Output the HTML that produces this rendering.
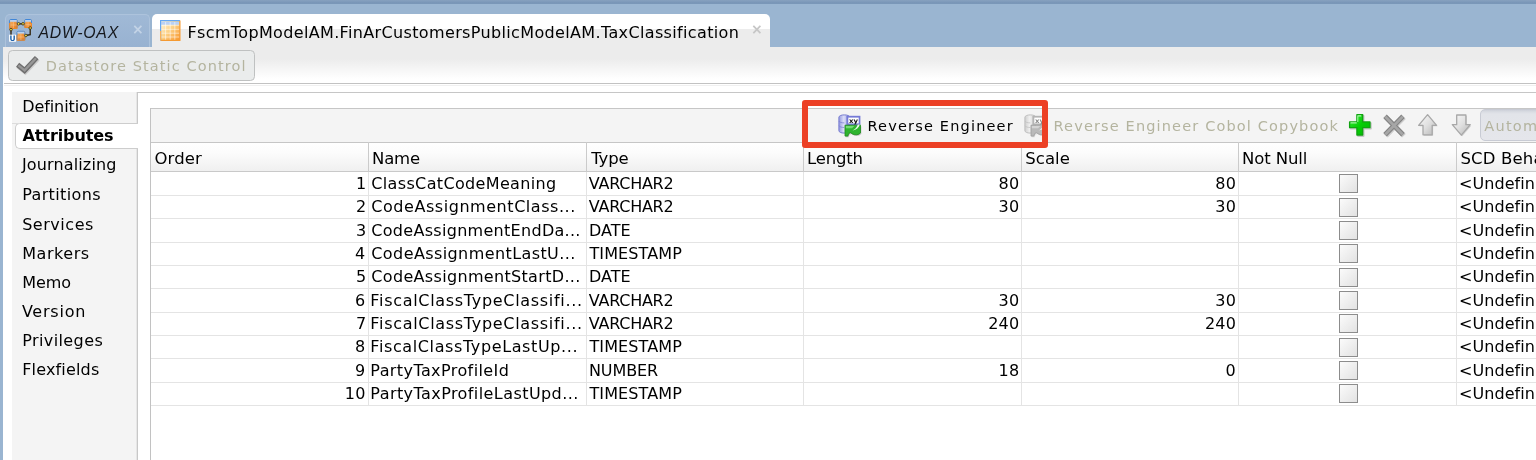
<!DOCTYPE html>
<html lang="en">
<head>
<meta charset="utf-8">
<title>Datastore Attributes</title>
<style>
html,body{margin:0;padding:0;}
body{width:1536px;height:460px;overflow:hidden;background:#fff;position:relative;font-family:"DejaVu Sans","Liberation Sans",sans-serif;font-size:16px;color:#000;}
.a{position:absolute;}
.t{position:absolute;white-space:nowrap;line-height:20px;}
#app{position:absolute;left:0;top:0;width:1536px;height:460px;overflow:hidden;will-change:transform;}
.hl{position:absolute;height:1px;background:#c9c9c9;}
.vl{position:absolute;width:1px;background:#c9c9c9;}
.cb{position:absolute;width:17px;height:17px;border:1px solid #8c8c8c;background:linear-gradient(135deg,#fbfbfb,#e2e2e2);}
</style>
</head>
<body>
<div id="app">
<div class="a" style="left:0;top:0;width:1536px;height:47px;background:linear-gradient(#87a1bf 0px,#7d99ba 2px,#7592b4 3.4px,#9ab5d1 4.1px,#9ab5d1 100%);"></div>
<div class="a" style="left:0;top:47px;width:3px;height:413px;background:#9ab5d1;"></div>
<div class="a" style="left:3px;top:46.6px;width:1533px;height:37.4px;background:linear-gradient(#ececec 0,#ececec 12px,#ffffff 32px);"></div>
<div class="a" style="left:5px;top:14px;width:145px;height:33px;border:1px solid #adc3dc;border-bottom:none;border-radius:5px 5px 0 0;background:linear-gradient(#a0b9d6,#98b2d1);box-sizing:border-box;"></div>
<div class="a" style="left:152px;top:14px;width:618px;height:33px;border-radius:5px 5px 0 0;background:linear-gradient(#ffffff 0,#ffffff 14.5px,#ececec 15.5px,#ececec 100%);"></div>
<svg class="a" style="left:8px;top:18px" width="26" height="26" viewBox="0 0 26 26">
<defs><linearGradient id="og" x1="0" y1="0" x2="1" y2="1"><stop offset="0" stop-color="#f8b466"/><stop offset="1" stop-color="#e8791c"/></linearGradient></defs>
<g stroke="#2e2008" stroke-width="1.3" fill="none"><path d="M9.500 5.800h7M3 11v6.500M22.200 9.500v7.200l-4.500 .8"/></g>
<g stroke-width="1">
<rect x="1.600" y="1.500" width="7.600" height="9" rx="1.200" fill="url(#og)" stroke="#3f86d9"/>
<rect x="16.700" y="1.500" width="6.800" height="8" rx="1.200" fill="url(#og)" stroke="#3f86d9"/>
<rect x="9" y="13.300" width="7.800" height="9" rx="1.200" fill="url(#og)" stroke="#3f86d9"/>
</g>
<g fill="#b5d0f2"><rect x="2.100" y="2" width="6.600" height="1.800"/><rect x="17.200" y="2" width="5.800" height="1.800"/><rect x="9.500" y="13.800" width="6.800" height="1.800"/></g>
<g stroke="#e9892c" stroke-width="1" fill="none"><path d="M1.600 5v5.500h7.600V5M16.700 5v4.500h6.800V5M9 17v5.300h7.800V17"/></g>
<g stroke="#fbd3a0" stroke-width=".6" stroke-opacity=".8"><path d="M5.400 4v6M2.500 7h6M20.100 4v5M17.500 6.700h5.500M12.900 16v6M9.800 19h6.400"/></g>
<rect x="1.100" y="16.700" width="7" height="7" fill="#fff"/><text x="4.600" y="23" font-family="'DejaVu Sans',sans-serif" font-weight="bold" font-size="7.500" fill="#1f63ad" text-anchor="middle">U</text>
<g fill="#ecdc4a" stroke="#2e2008" stroke-width=".7"><circle cx="10.600" cy="5.800" r="1.300"/><circle cx="15" cy="5.800" r="1.300"/><circle cx="3" cy="11.600" r="1.300"/><circle cx="22.200" cy="10" r="1.300"/><circle cx="17.900" cy="17.500" r="1.300"/></g>
</svg>
<div class="t" style="left:38.50px;top:23px;font-size:15.8px;color:#15181d;font-style:italic;letter-spacing:0.75px;font-family:'Liberation Sans',sans-serif;">ADW-OAX</div>
<div class="t" style="left:132.00px;top:19px;font-size:14px;color:#c3d3e6;font-weight:bold;">×</div>
<svg class="a" style="left:160px;top:20px" width="21" height="21" viewBox="0 0 21 21">
<defs><linearGradient id="tg" x1="0" y1="0" x2="1" y2="1"><stop offset="0" stop-color="#fffbe8"/><stop offset=".45" stop-color="#fdd48a"/><stop offset="1" stop-color="#f8962c"/></linearGradient></defs>
<rect x=".6" y=".6" width="19.300" height="19.800" fill="url(#tg)"/>
<rect x="1.200" y="1.800" width="18" height="3" fill="#b9d1f6"/>
<g stroke="#fff" stroke-opacity=".6" stroke-width=".9"><path d="M5.600 2v18M10.200 2v18M14.800 2v18M1 5.300h18.500M1 9.300h18.500M1 13.200h18.500M1 17h18.500"/></g>
<path d="M19.900 .6v19.800H.6" fill="none" stroke="#f59a32" stroke-width="1.200"/>
<path d="M.6 20.400V.6h19.300" fill="none" stroke="#64a7f3" stroke-width="1.200"/>
<path d="M.6 20.400V11" fill="none" stroke="#f7b15c" stroke-width="1.200"/>
</svg>
<div class="t" style="left:187.50px;top:23px;font-size:16px;letter-spacing:0.354px;">FscmTopModelAM.FinArCustomersPublicModelAM.TaxClassification</div>
<div class="t" style="left:751.00px;top:19px;font-size:14px;color:#c6c6c6;font-weight:bold;">×</div>
<div class="a" style="left:8px;top:50px;width:246.5px;height:31px;box-sizing:border-box;border:1px solid #bfc1c1;border-radius:4.5px;background:#eaecec;"></div>
<svg class="a" style="left:15px;top:54px" width="25" height="22" viewBox="0 0 25 22">
<path d="M2.600 10.800l7 5.700L21.700 3.600" fill="none" stroke="#cdcdcd" stroke-width="5.800" stroke-linejoin="miter" transform="translate(.7 .9)"/>
<path d="M2.600 10.800l7 5.700L21.700 3.600" fill="none" stroke="#6e6e6e" stroke-width="5" stroke-linejoin="miter"/>
<path d="M3.400 11.400l6.200 5L21 4.200" fill="none" stroke="#979797" stroke-width="2.400" stroke-linejoin="miter"/>
</svg>
<div class="t" style="left:45.80px;top:56px;font-size:14.5px;color:#b4b49f;letter-spacing:1.104px;">Datastore Static Control</div>
<div class="hl" style="left:4px;top:83.2px;width:1532px;height:1.3px;background:#c2c2c2;"></div>
<div class="hl" style="left:4px;top:84.5px;width:1532px;background:#f0f0f0;"></div>
<div class="a" style="left:12px;top:92px;width:125px;height:368px;background:#f4f4f4;"></div>
<div class="vl" style="left:136px;top:92px;height:368px;background:#e6e6e6;"></div>
<div class="vl" style="left:137px;top:92px;height:368px;background:#c8c8c8;"></div>
<div class="hl" style="left:137px;top:92.2px;width:1399px;background:#c6c6c6;"></div>
<div class="a" style="left:15px;top:123px;width:123px;height:25.6px;box-sizing:border-box;border:1px solid #cdcdcd;border-right:none;border-radius:5px 0 0 5px;background:#fff;"></div>
<div class="hl" style="left:12px;top:123px;width:8px;background:#dcdcdc;"></div>
<div class="t" style="left:22.20px;top:97px;font-size:16px;letter-spacing:-0.078px;">Definition</div>
<div class="t" style="left:22.50px;top:126px;font-size:16px;font-weight:bold;letter-spacing:-0.1px;">Attributes</div>
<div class="t" style="left:21.90px;top:155px;font-size:16px;letter-spacing:0.145px;">Journalizing</div>
<div class="t" style="left:22.20px;top:185px;font-size:16px;letter-spacing:0.367px;">Partitions</div>
<div class="t" style="left:22.20px;top:215px;font-size:16px;letter-spacing:0.529px;">Services</div>
<div class="t" style="left:22.20px;top:244px;font-size:16px;letter-spacing:0.55px;">Markers</div>
<div class="t" style="left:22.20px;top:273px;font-size:16px;letter-spacing:-0.033px;">Memo</div>
<div class="t" style="left:21.90px;top:302px;font-size:16px;letter-spacing:0.767px;">Version</div>
<div class="t" style="left:22.20px;top:331px;font-size:16px;letter-spacing:0.4px;">Privileges</div>
<div class="t" style="left:22.20px;top:360px;font-size:16px;letter-spacing:0.167px;">Flexfields</div>
<div class="a" style="left:150px;top:108.3px;width:1386px;height:34px;box-sizing:border-box;border:1px solid #c6c6c6;border-right:none;border-bottom:none;background:#f4f4f4;"></div>
<div class="a" style="left:151px;top:142px;width:1385px;height:30px;background:linear-gradient(#ffffff,#fcfcfc 35%,#efefef);"></div>
<div class="hl" style="left:150px;top:142px;width:1386px;background:#c6c6c6;"></div>
<div class="hl" style="left:150px;top:171.2px;width:1386px;background:#c9c9c9;"></div>
<div class="vl" style="left:150.2px;top:108px;height:352px;background:#c2c2c2;"></div>
<div class="vl" style="left:368px;top:142px;height:30px;background:#cbcbcb;"></div>
<div class="vl" style="left:368px;top:172px;height:233.5px;background:#e4e4e4;"></div>
<div class="vl" style="left:586.2px;top:142px;height:30px;background:#cbcbcb;"></div>
<div class="vl" style="left:586.2px;top:172px;height:233.5px;background:#e4e4e4;"></div>
<div class="vl" style="left:803.2px;top:142px;height:30px;background:#cbcbcb;"></div>
<div class="vl" style="left:803.2px;top:172px;height:233.5px;background:#e4e4e4;"></div>
<div class="vl" style="left:1021.2px;top:142px;height:30px;background:#cbcbcb;"></div>
<div class="vl" style="left:1021.2px;top:172px;height:233.5px;background:#e4e4e4;"></div>
<div class="vl" style="left:1238px;top:142px;height:30px;background:#cbcbcb;"></div>
<div class="vl" style="left:1238px;top:172px;height:233.5px;background:#e4e4e4;"></div>
<div class="vl" style="left:1456.2px;top:142px;height:30px;background:#cbcbcb;"></div>
<div class="vl" style="left:1456.2px;top:172px;height:233.5px;background:#e4e4e4;"></div>
<div class="hl" style="left:151px;top:194.8px;width:1385px;background:#e4e4e4;"></div>
<div class="hl" style="left:151px;top:218.1px;width:1385px;background:#e4e4e4;"></div>
<div class="hl" style="left:151px;top:241.5px;width:1385px;background:#e4e4e4;"></div>
<div class="hl" style="left:151px;top:264.8px;width:1385px;background:#e4e4e4;"></div>
<div class="hl" style="left:151px;top:288.2px;width:1385px;background:#e4e4e4;"></div>
<div class="hl" style="left:151px;top:311.6px;width:1385px;background:#e4e4e4;"></div>
<div class="hl" style="left:151px;top:334.9px;width:1385px;background:#e4e4e4;"></div>
<div class="hl" style="left:151px;top:358.3px;width:1385px;background:#e4e4e4;"></div>
<div class="hl" style="left:151px;top:381.6px;width:1385px;background:#e4e4e4;"></div>
<div class="hl" style="left:151px;top:405.0px;width:1385px;background:#e4e4e4;"></div>
<div class="t" style="left:154.50px;top:149px;font-size:16.5px;letter-spacing:0.125px;">Order</div>
<div class="t" style="left:372.00px;top:149px;font-size:16.5px;letter-spacing:-0.167px;">Name</div>
<div class="t" style="left:591.25px;top:149px;font-size:16.5px;letter-spacing:-0.167px;">Type</div>
<div class="t" style="left:807.00px;top:149px;font-size:16.5px;letter-spacing:-0.2px;">Length</div>
<div class="t" style="left:1025.25px;top:149px;font-size:16.5px;letter-spacing:0.062px;">Scale</div>
<div class="t" style="left:1242.00px;top:149px;font-size:16.5px;letter-spacing:-0.107px;">Not Null</div>
<div class="t" style="left:1460.50px;top:149px;font-size:16.5px;letter-spacing:0.15px;">SCD Behavior</div>
<div class="t" style="left:356.00px;top:174px;font-size:16px;letter-spacing:0.3px;">1</div>
<div class="t" style="left:371.30px;top:174px;font-size:16px;letter-spacing:0.344px;">ClassCatCodeMeaning</div>
<div class="t" style="left:588.80px;top:174px;font-size:16px;letter-spacing:-0.257px;">VARCHAR2</div>
<div class="t" style="left:998.45px;top:174px;font-size:16px;letter-spacing:0.3px;">80</div>
<div class="t" style="left:1215.20px;top:174px;font-size:16px;letter-spacing:0.3px;">80</div>
<div class="cb" style="left:1339.2px;top:174.2px;"></div>
<div class="t" style="left:1459.00px;top:174px;font-size:16px;letter-spacing:0.057px;">&lt;Undefin<span style="margin-left:2px">ed&gt;</span></div>
<div class="t" style="left:356.00px;top:197px;font-size:16px;letter-spacing:0.3px;">2</div>
<div class="t" style="left:371.30px;top:197px;font-size:16px;letter-spacing:0.548px;">CodeAssignmentClass...</div>
<div class="t" style="left:588.80px;top:197px;font-size:16px;letter-spacing:-0.257px;">VARCHAR2</div>
<div class="t" style="left:998.45px;top:197px;font-size:16px;letter-spacing:0.3px;">30</div>
<div class="t" style="left:1215.20px;top:197px;font-size:16px;letter-spacing:0.3px;">30</div>
<div class="cb" style="left:1339.2px;top:197.6px;"></div>
<div class="t" style="left:1459.00px;top:197px;font-size:16px;letter-spacing:0.057px;">&lt;Undefin<span style="margin-left:2px">ed&gt;</span></div>
<div class="t" style="left:356.00px;top:221px;font-size:16px;letter-spacing:0.3px;">3</div>
<div class="t" style="left:371.30px;top:221px;font-size:16px;letter-spacing:0.295px;">CodeAssignmentEndDa...</div>
<div class="t" style="left:589.00px;top:221px;font-size:16px;">DATE</div>
<div class="cb" style="left:1339.2px;top:220.9px;"></div>
<div class="t" style="left:1459.00px;top:221px;font-size:16px;letter-spacing:0.057px;">&lt;Undefin<span style="margin-left:2px">ed&gt;</span></div>
<div class="t" style="left:355.00px;top:244px;font-size:16px;letter-spacing:0.3px;">4</div>
<div class="t" style="left:371.30px;top:244px;font-size:16px;letter-spacing:0.405px;">CodeAssignmentLastU...</div>
<div class="t" style="left:589.50px;top:244px;font-size:16px;letter-spacing:0.1px;">TIMESTAMP</div>
<div class="cb" style="left:1339.2px;top:244.3px;"></div>
<div class="t" style="left:1459.00px;top:244px;font-size:16px;letter-spacing:0.057px;">&lt;Undefin<span style="margin-left:2px">ed&gt;</span></div>
<div class="t" style="left:356.00px;top:267px;font-size:16px;letter-spacing:0.3px;">5</div>
<div class="t" style="left:371.30px;top:267px;font-size:16px;letter-spacing:0.327px;">CodeAssignmentStartD...</div>
<div class="t" style="left:589.00px;top:267px;font-size:16px;">DATE</div>
<div class="cb" style="left:1339.2px;top:267.6px;"></div>
<div class="t" style="left:1459.00px;top:267px;font-size:16px;letter-spacing:0.057px;">&lt;Undefin<span style="margin-left:2px">ed&gt;</span></div>
<div class="t" style="left:355.00px;top:291px;font-size:16px;letter-spacing:0.3px;">6</div>
<div class="t" style="left:370.30px;top:291px;font-size:16px;letter-spacing:0.688px;">FiscalClassTypeClassifi...</div>
<div class="t" style="left:588.80px;top:291px;font-size:16px;letter-spacing:-0.257px;">VARCHAR2</div>
<div class="t" style="left:998.45px;top:291px;font-size:16px;letter-spacing:0.3px;">30</div>
<div class="t" style="left:1215.20px;top:291px;font-size:16px;letter-spacing:0.3px;">30</div>
<div class="cb" style="left:1339.2px;top:291.0px;"></div>
<div class="t" style="left:1459.00px;top:291px;font-size:16px;letter-spacing:0.057px;">&lt;Undefin<span style="margin-left:2px">ed&gt;</span></div>
<div class="t" style="left:356.00px;top:314px;font-size:16px;letter-spacing:0.3px;">7</div>
<div class="t" style="left:370.30px;top:314px;font-size:16px;letter-spacing:0.688px;">FiscalClassTypeClassifi...</div>
<div class="t" style="left:588.80px;top:314px;font-size:16px;letter-spacing:-0.257px;">VARCHAR2</div>
<div class="t" style="left:988.15px;top:314px;font-size:16px;letter-spacing:0.3px;">240</div>
<div class="t" style="left:1204.90px;top:314px;font-size:16px;letter-spacing:0.3px;">240</div>
<div class="cb" style="left:1339.2px;top:314.4px;"></div>
<div class="t" style="left:1459.00px;top:314px;font-size:16px;letter-spacing:0.057px;">&lt;Undefin<span style="margin-left:2px">ed&gt;</span></div>
<div class="t" style="left:355.00px;top:337px;font-size:16px;letter-spacing:0.3px;">8</div>
<div class="t" style="left:370.30px;top:337px;font-size:16px;letter-spacing:0.609px;">FiscalClassTypeLastUp...</div>
<div class="t" style="left:589.50px;top:337px;font-size:16px;letter-spacing:0.1px;">TIMESTAMP</div>
<div class="cb" style="left:1339.2px;top:337.7px;"></div>
<div class="t" style="left:1459.00px;top:337px;font-size:16px;letter-spacing:0.057px;">&lt;Undefin<span style="margin-left:2px">ed&gt;</span></div>
<div class="t" style="left:355.00px;top:361px;font-size:16px;letter-spacing:0.3px;">9</div>
<div class="t" style="left:370.30px;top:361px;font-size:16px;letter-spacing:0.406px;">PartyTaxProfileId</div>
<div class="t" style="left:589.00px;top:361px;font-size:16px;letter-spacing:-0.1px;">NUMBER</div>
<div class="t" style="left:998.45px;top:361px;font-size:16px;letter-spacing:0.3px;">18</div>
<div class="t" style="left:1225.50px;top:361px;font-size:16px;letter-spacing:0.3px;">0</div>
<div class="cb" style="left:1339.2px;top:361.1px;"></div>
<div class="t" style="left:1459.00px;top:361px;font-size:16px;letter-spacing:0.057px;">&lt;Undefin<span style="margin-left:2px">ed&gt;</span></div>
<div class="t" style="left:344.70px;top:384px;font-size:16px;letter-spacing:0.3px;">10</div>
<div class="t" style="left:370.30px;top:384px;font-size:16px;letter-spacing:0.425px;">PartyTaxProfileLastUpd...</div>
<div class="t" style="left:589.50px;top:384px;font-size:16px;letter-spacing:0.1px;">TIMESTAMP</div>
<div class="cb" style="left:1339.2px;top:384.4px;"></div>
<div class="t" style="left:1459.00px;top:384px;font-size:16px;letter-spacing:0.057px;">&lt;Undefin<span style="margin-left:2px">ed&gt;</span></div>
<svg class="a" style="left:837.5px;top:113.5px" width="24" height="24" viewBox="0 0 24 24">
<defs><linearGradient id="cya" x1="0" y1="0" x2="1" y2="0"><stop offset="0" stop-color="#959ae0"/><stop offset=".45" stop-color="#dcdef8"/><stop offset="1" stop-color="#959ae0"/></linearGradient></defs>
<path d="M.9 3.300C.9 1.700 3.400 .9 6.300 .9s5.400 .8 5.400 2.400v13.400c0 1.600-2.500 2.400-5.400 2.400S.9 18.300 .9 16.700z" fill="url(#cya)" stroke="#767bcf" stroke-width="1"/>
<path d="M1 7.200c.6 1.100 2.700 1.700 5.300 1.700M1 11.800c.6 1.100 2.700 1.700 5.300 1.700" fill="none" stroke="#767bcf" stroke-width=".9" stroke-opacity=".8"/>
<rect x="8.400" y="1.800" width="14" height="9.200" fill="#757ad6"/>
<rect x="10.300" y="3.600" width="10.400" height="5.800" fill="#fff"/>
<text x="11" y="8.700" font-family="'DejaVu Sans',sans-serif" font-weight="bold" font-size="6.500" fill="#111" textLength="9" lengthAdjust="spacingAndGlyphs">xy</text>
<path d="M7 11.500h15.500v7.700c-1.700 2-5.200 2.600-8.200 1l-1.700-1.200-1.900 .8-.8 2.600H7z" fill="#9a9a9a" opacity=".55" transform="translate(.8 .9)"/>
<path d="M7 11.200h15.500v7.700c-1.700 2-5.200 2.600-8.200 1l-1.700-1.200-1.900 .8-.8 2.600H7z" fill="#2fb42f" stroke="#1d8a1d" stroke-width=".8" stroke-linejoin="round"/>
<path d="M7.800 12h8.500l-2.200 2.200H7.800z" fill="#8be88b" opacity=".75"/>
<path d="M21.800 10.600c-.9 3.200-3.400 5.300-7.200 5.900 2.300-.8 4.300-2.800 5.200-5.900z" fill="#fff" opacity=".9"/>
</svg>
<div class="t" style="left:867.50px;top:116px;font-size:14.5px;letter-spacing:1.18px;">Reverse Engineer</div>
<svg class="a" style="left:1023.5px;top:113.5px" width="24" height="24" viewBox="0 0 24 24">
<defs><linearGradient id="cyb" x1="0" y1="0" x2="1" y2="0"><stop offset="0" stop-color="#cfcfcf"/><stop offset=".45" stop-color="#f0f0f0"/><stop offset="1" stop-color="#cfcfcf"/></linearGradient></defs>
<path d="M.9 3.300C.9 1.700 3.400 .9 6.300 .9s5.400 .8 5.400 2.400v13.400c0 1.600-2.500 2.400-5.400 2.400S.9 18.300 .9 16.700z" fill="url(#cyb)" stroke="#bdbdbd" stroke-width="1"/>
<path d="M1 7.200c.6 1.100 2.700 1.700 5.300 1.700M1 11.800c.6 1.100 2.700 1.700 5.300 1.700" fill="none" stroke="#bdbdbd" stroke-width=".9" stroke-opacity=".8"/>
<rect x="8.400" y="1.800" width="14" height="9.200" fill="#b5b5b5"/>
<rect x="10.300" y="3.600" width="10.400" height="5.800" fill="#fff"/>
<text x="11" y="8.700" font-family="'DejaVu Sans',sans-serif" font-weight="bold" font-size="6.500" fill="#8a8a8a" textLength="9" lengthAdjust="spacingAndGlyphs">xy</text>
<path d="M7 11.500h15.500v7.700c-1.700 2-5.200 2.600-8.200 1l-1.700-1.200-1.900 .8-.8 2.600H7z" fill="#c4c4c4" opacity=".55" transform="translate(.8 .9)"/>
<path d="M7 11.200h15.500v7.700c-1.700 2-5.200 2.600-8.200 1l-1.700-1.200-1.900 .8-.8 2.600H7z" fill="#b9b9b9" stroke="#9d9d9d" stroke-width=".8" stroke-linejoin="round"/>
<path d="M7.800 12h8.500l-2.200 2.200H7.800z" fill="#dedede" opacity=".75"/>
<path d="M21.800 10.600c-.9 3.200-3.400 5.300-7.200 5.900 2.300-.8 4.300-2.800 5.200-5.900z" fill="#fff" opacity=".9"/>
</svg>
<div class="t" style="left:1053.50px;top:116px;font-size:14.5px;color:#b4b49f;letter-spacing:1.15px;">Reverse Engineer Cobol Copybook</div>
<svg class="a" style="left:1348px;top:113px" width="25" height="25" viewBox="0 0 25 25">
<defs><linearGradient id="pg" x1="0" y1="0" x2="1" y2="1"><stop offset="0" stop-color="#3fe83f"/><stop offset=".5" stop-color="#05cf05"/><stop offset="1" stop-color="#06b406"/></linearGradient></defs>
<path d="M8.900 1.600h5.800v7.300h7.300v5.800h-7.300v7.300H8.900v-7.300H1.600V8.900h7.300z" fill="#8f8f8f" opacity=".45" stroke="#8f8f8f" stroke-width="1.600" stroke-linejoin="round" transform="translate(1 1.100)"/>
<path d="M8.900 1.600h5.800v7.300h7.300v5.800h-7.300v7.300H8.900v-7.300H1.600V8.900h7.300z" fill="url(#pg)" stroke="#10a310" stroke-width="1.300" stroke-linejoin="round"/>
<path d="M9.800 2.900h3M2.900 9.900h5.400M9.800 2.900v5.500" stroke="#a6f7a6" stroke-width="1.100" stroke-linecap="round" fill="none"/>
</svg>
<svg class="a" style="left:1382px;top:113px" width="25" height="25" viewBox="0 0 25 25">
<path d="M3 3.300l18 18.500M21 3.300L3 21.800" stroke="#bdbdbd" stroke-width="5.200" stroke-linecap="butt" transform="translate(.9 1)" opacity=".7"/>
<path d="M3 3.300l18 18.500M21 3.300L3 21.800" stroke="#848484" stroke-width="4.900" stroke-linecap="butt"/>
<path d="M3.300 3.600l17.400 17.900M20.700 3.600L3.300 21.500" stroke="#a6a6a6" stroke-width="2.700" stroke-linecap="butt"/>
</svg>
<svg class="a" style="left:1416px;top:113px" width="25" height="25" viewBox="0 0 25 25">
<defs><linearGradient id="ag" x1="0" y1="0" x2="1" y2="1"><stop offset="0" stop-color="#fafafa"/><stop offset=".5" stop-color="#e0e0e0"/><stop offset="1" stop-color="#b4b4b4"/></linearGradient></defs>
<path d="M11.600 1.700l9 10.600h-4.400v9.500H7v-9.500H2.600z" fill="#a8a8a8" opacity=".5" transform="translate(.9 1)"/>
<path d="M11.600 1.700l9 10.600h-4.400v9.500H7v-9.500H2.600z" fill="url(#ag)" stroke="#a8a8a8" stroke-width="1.300" stroke-linejoin="round"/>
</svg>
<svg class="a" style="left:1449px;top:113px" width="25" height="25" viewBox="0 0 25 25">
<path d="M12.300 22.200l9-10.500h-4.400V2H7.700v9.700H3.300z" fill="#a8a8a8" opacity=".5" transform="translate(.9 1)"/>
<path d="M12.300 22.200l9-10.500h-4.400V2H7.700v9.700H3.300z" fill="url(#ag)" stroke="#a8a8a8" stroke-width="1.300" stroke-linejoin="round"/>
</svg>
<div class="a" style="left:1480px;top:109px;width:70px;height:32px;box-sizing:border-box;border:1px solid #c8cbd4;border-radius:5px;background:linear-gradient(#cdd0d9 0,#dadde3 2px,#e2e4e9 4px,#e5e6eb 100%);"></div>
<div class="t" style="left:1484.30px;top:116px;font-size:14.5px;color:#b4b49f;letter-spacing:1.25px;">Automatic</div>
<div class="a" style="left:802px;top:100px;width:246px;height:48px;box-sizing:border-box;border:6px solid #ec4025;border-radius:3px;"></div>
</div>
</body>
</html>
